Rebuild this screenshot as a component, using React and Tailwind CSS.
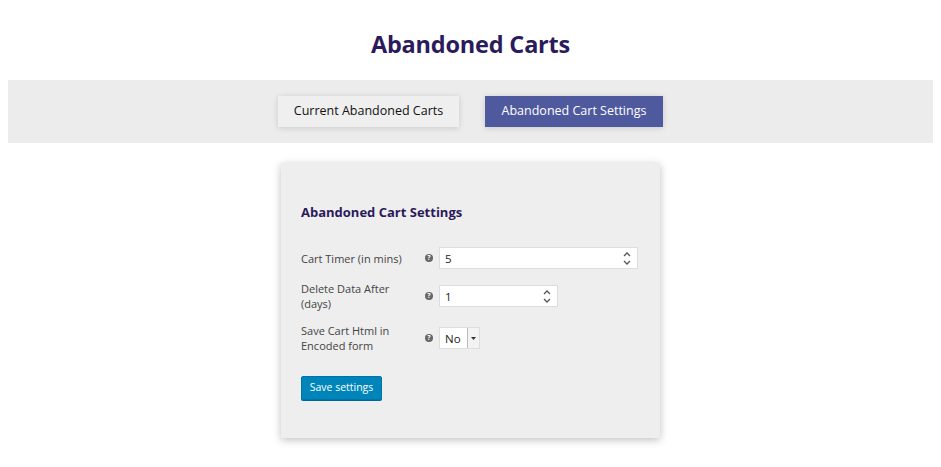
import { useState } from 'react';

const HelpIcon = () => (
  <span className="w-[8px] h-[8px] rounded-full bg-[#666] text-white text-[7px] leading-[8px] font-bold flex items-center justify-center">
    ?
  </span>
);

const Spinner = () => (
  <span className="flex flex-col items-center justify-center text-[#555] leading-none">
    <svg width="8" height="5" viewBox="0 0 8 5"><path d="M1 4 L4 1 L7 4" fill="none" stroke="#555" strokeWidth="1.3" /></svg>
    <svg width="8" height="5" viewBox="0 0 8 5" className="mt-[3px]"><path d="M1 1 L4 4 L7 1" fill="none" stroke="#555" strokeWidth="1.3" /></svg>
  </span>
);

const App = () => {
  const [tab, setTab] = useState('settings');
  const [timer, setTimer] = useState('5');
  const [days, setDays] = useState('1');

  return (
    <div className="w-[941px] h-[467px] bg-white font-['Open_Sans',sans-serif] overflow-hidden">
      <h1 className="pt-[30px] text-center text-[23.5px] font-bold text-[#2b1a5c] leading-[28px] tracking-[-0.2px]">
        Abandoned Carts
      </h1>

      {/* Tabs */}
      <div className="mx-[8px] mt-[22px] h-[63px] bg-[#ececec] flex items-center justify-center gap-[26px]">
        <button
          onClick={() => setTab('current')}
          className={`w-[181px] h-[31px] text-[12.5px] shadow-[0_1px_6px_rgba(0,0,0,0.15)] ${
            tab === 'current' ? 'bg-[#4f5a9e] text-white' : 'bg-[#efefef] text-[#111]'
          }`}
        >
          Current Abandoned Carts
        </button>
        <button
          onClick={() => setTab('settings')}
          className={`w-[178px] h-[31px] text-[12.5px] shadow-[0_1px_6px_rgba(0,0,0,0.15)] ${
            tab === 'settings' ? 'bg-[#4f5a9e] text-white' : 'bg-[#efefef] text-[#111]'
          }`}
        >
          Abandoned Cart Settings
        </button>
      </div>

      {/* Settings card */}
      <div className="mt-[20px] mx-auto w-[379px] h-[275px] bg-[#eeeeee] shadow-[0_2px_8px_rgba(0,0,0,0.25)] pl-[20px] pt-[40px]">
        <h2 className="text-[13px] font-bold text-[#2b1a5c] leading-[18px]">Abandoned Cart Settings</h2>

        <div className="mt-[26px] flex flex-col gap-[12px] text-[11px] text-[#444] leading-[15px]">
          <div className="flex items-center">
            <span className="w-[124px]">Cart Timer (in mins)</span>
            <HelpIcon />
            <div className="ml-[6px] w-[199px] h-[22px] bg-white border border-[#ddd] flex items-center pl-[5px] pr-[6px]">
              <input
                value={timer}
                onChange={(e) => setTimer(e.target.value)}
                className="flex-1 min-w-0 outline-none text-[11.5px] text-[#222] bg-transparent"
              />
              <Spinner />
            </div>
          </div>

          <div className="flex items-center">
            <span className="w-[124px]">Delete Data After<br />(days)</span>
            <HelpIcon />
            <div className="ml-[6px] w-[119px] h-[22px] bg-white border border-[#ddd] flex items-center pl-[5px] pr-[6px]">
              <input
                value={days}
                onChange={(e) => setDays(e.target.value)}
                className="flex-1 min-w-0 outline-none text-[11.5px] text-[#222] bg-transparent"
              />
              <Spinner />
            </div>
          </div>

          <div className="flex items-center">
            <span className="w-[124px]">Save Cart Html in<br />Encoded form</span>
            <HelpIcon />
            <div className="ml-[6px] w-[41px] h-[22px] bg-white border border-[#ddd] flex items-center">
              <span className="flex-1 pl-[5px] text-[11.5px] text-[#222]">No</span>
              <span className="w-[12px] h-full bg-[#f3f3f3] border-l border-[#bbb] flex items-center justify-center">
                <svg width="5" height="3" viewBox="0 0 5 3"><path d="M0 0 H5 L2.5 3 Z" fill="#333" /></svg>
              </span>
            </div>
          </div>
        </div>

        <button className="mt-[23px] w-[81px] h-[24px] bg-[#0085ba] border border-[#0073aa] rounded-[2px] text-white text-[10.5px] shadow-[0_1px_0_#006799]">
          Save settings
        </button>
      </div>
    </div>
  );
};

export default App;
